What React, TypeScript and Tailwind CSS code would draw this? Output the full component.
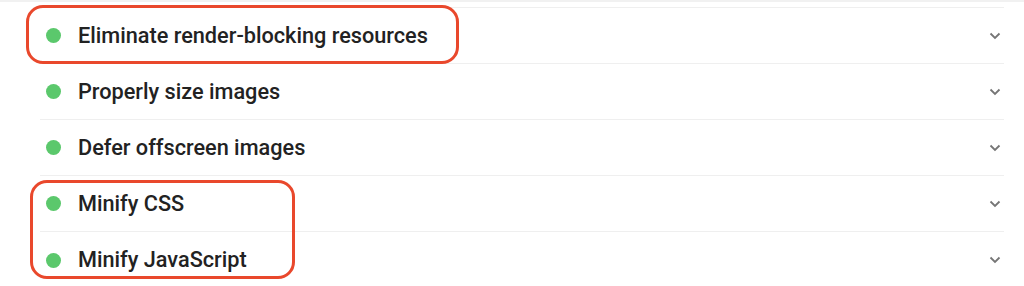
const audits = [
  "Eliminate render-blocking resources",
  "Properly size images",
  "Defer offscreen images",
  "Minify CSS",
  "Minify JavaScript",
];

function Chevron() {
  return (
    <svg width="12" height="8" viewBox="0 0 12 8" fill="none" className="text-[#757575]">
      <path d="M1.5 1.5L6 6L10.5 1.5" stroke="currentColor" strokeWidth="1.8" />
    </svg>
  );
}

export default function App() {
  return (
    <div
      className="relative w-[1024px] h-[286px] overflow-hidden bg-white"
      style={{ fontFamily: "Roboto, 'Liberation Sans', sans-serif" }}
    >
      <div className="h-[2px] bg-[#f1f1f1]" />
      <div className="pt-[5px] pl-[40px] pr-[20px]">
        <div className="border-t border-[#efefef]">
          {audits.map((title, i) => (
            <div
              key={title}
              className={
                i < audits.length - 1
                  ? "flex items-center h-[56px] border-b border-[#efefef] pl-[6px] pr-[3px]"
                  : "flex items-center h-[56px] pl-[6px] pr-[3px]"
              }
            >
              <span className="w-[15px] h-[15px] rounded-full bg-[#5bc86c] shrink-0" />
              <span className="ml-[17px] text-[21.7px] leading-[24px] font-medium text-[#222222]">
                {title}
              </span>
              <span className="ml-auto">
                <Chevron />
              </span>
            </div>
          ))}
        </div>
      </div>

      {/* annotation boxes */}
      <div className="absolute left-[26px] top-[5px] w-[433px] h-[59px] rounded-[17px] border-[3px] border-[#e9482c]" />
      <div className="absolute left-[30px] top-[180px] w-[265px] h-[99px] rounded-[17px] border-[3px] border-[#e9482c]" />
    </div>
  );
}
